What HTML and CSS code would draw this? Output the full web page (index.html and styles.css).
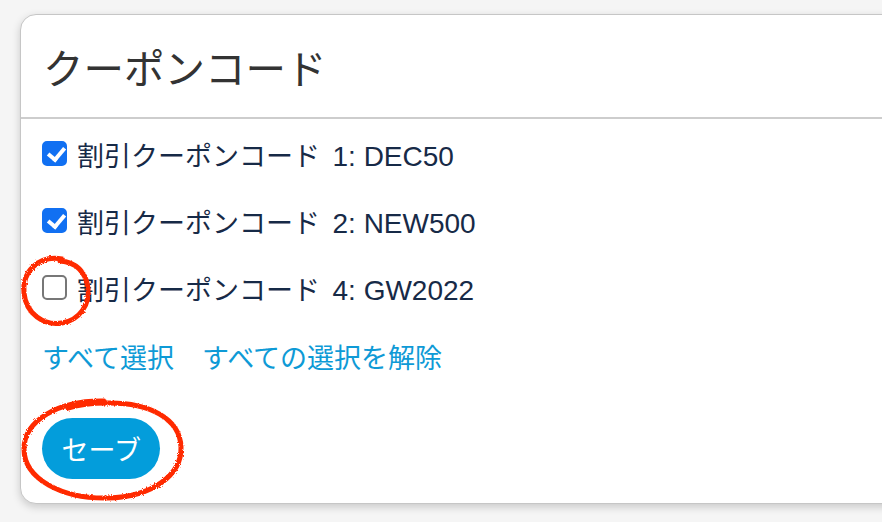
FILE: index.html
```html
<!DOCTYPE html>
<html lang="ja">
<head>
<meta charset="utf-8">
<title>クーポンコード</title>
<link rel="stylesheet" href="styles.css">
</head>
<body>
<div class="card">
  <div class="card-header">クーポンコード</div>
  <div class="card-body">
    <label class="row"><input type="checkbox" class="cb" checked><span class="label">割引クーポンコード <span class="code">1: DEC50</span></span></label>
    <label class="row"><input type="checkbox" class="cb" checked><span class="label">割引クーポンコード <span class="code">2: NEW500</span></span></label>
    <label class="row"><input type="checkbox" class="cb"><span class="label">割引クーポンコード <span class="code">4: GW2022</span></span></label>
    <div class="links">
      <a href="#" class="link">すべて選択</a>
      <a href="#" class="link">すべての選択を解除</a>
    </div>
    <button class="save" type="button">セーブ</button>
  </div>
</div>
<svg class="marks" width="882" height="522" viewBox="0 0 882 522" aria-hidden="true">
  <defs>
    <filter id="rough" x="-10%" y="-10%" width="120%" height="120%">
      <feTurbulence type="fractalNoise" baseFrequency="0.9" numOctaves="2" seed="3" result="n"/>
      <feDisplacementMap in="SourceGraphic" in2="n" scale="3"/>
    </filter>
  </defs>
  <g filter="url(#rough)" fill="none" stroke="#ff2a00" stroke-width="5" stroke-linecap="round">
    <path d="M62 259 C38 255 22 272 24 293 C26 314 44 326 62 323 C80 320 90 304 88 288 C86 272 76 262 60 261"/>
    <path d="M104 401 C58 400 24 421 24 449 C24 479 62 499 108 498 C152 497 182 475 181 447 C180 419 150 402 106 403 C90 403 78 405 68 408"/>
  </g>
</svg>
</body>
</html>
```

FILE: styles.css
```css
html, body {
  margin: 0;
  padding: 0;
}

body {
  background: #f5f5f5;
  width: 882px;
  height: 522px;
  overflow: hidden;
  position: relative;
  font-family: "Liberation Sans", "Noto Sans CJK JP", sans-serif;
}

.card {
  margin: 14px 0 0 20px;
  width: 920px;
  height: 490px;
  box-sizing: border-box;
  background: #ffffff;
  border: 1px solid #c6c6c6;
  border-radius: 16px;
  box-shadow: 0 3px 9px rgba(0, 0, 0, 0.18);
  display: flex;
  flex-direction: column;
}

.card-header {
  height: 104px;
  box-sizing: border-box;
  border-bottom: 2px solid #cdcdcd;
  display: flex;
  align-items: center;
  padding: 0 0 0 22px;
  font-family: "Noto Sans CJK JP", sans-serif;
  font-size: 40.5px;
  color: #333333;
}

.card-body {
  padding: 1px 20px 0 21px;
  display: flex;
  flex-direction: column;
  align-items: flex-start;
}

.row {
  height: 67px;
  display: flex;
  align-items: center;
  gap: 10px;
  cursor: pointer;
}

.cb {
  appearance: none;
  -webkit-appearance: none;
  margin: 0;
  width: 25px;
  height: 25px;
  box-sizing: border-box;
  border: 2px solid #777777;
  border-radius: 5px;
  background: #ffffff;
  position: relative;
  flex: none;
}

.cb:checked {
  background: #1170f2;
  border-color: #1170f2;
}

.cb:checked::after {
  content: "";
  position: absolute;
  left: 6.5px;
  top: 1px;
  width: 7px;
  height: 13px;
  border: solid #ffffff;
  border-width: 0 4px 4px 0;
  transform: rotate(40deg);
}

.label {
  font-size: 27px;
  color: #172a47;
  margin-top: 7px;
  line-height: 1;
}

.code {
  font-size: 28px;
  margin-left: 5px;
}

.links {
  height: 70px;
  display: flex;
  align-items: center;
  gap: 28px;
  padding-left: 0;
}

.link {
  font-family: "Noto Sans CJK JP", sans-serif;
  font-size: 27px;
  color: #0e9ad6;
  text-decoration: none;
}

.save {
  margin-top: 27px;
  height: 61px;
  padding: 0 19.5px;
  border: none;
  border-radius: 31px;
  background: #039ddb;
  color: #ffffff;
  font-family: "Noto Sans CJK JP", sans-serif;
  font-size: 27px;
  cursor: pointer;
}

.marks {
  position: absolute;
  left: 0;
  top: 0;
  pointer-events: none;
}
```
